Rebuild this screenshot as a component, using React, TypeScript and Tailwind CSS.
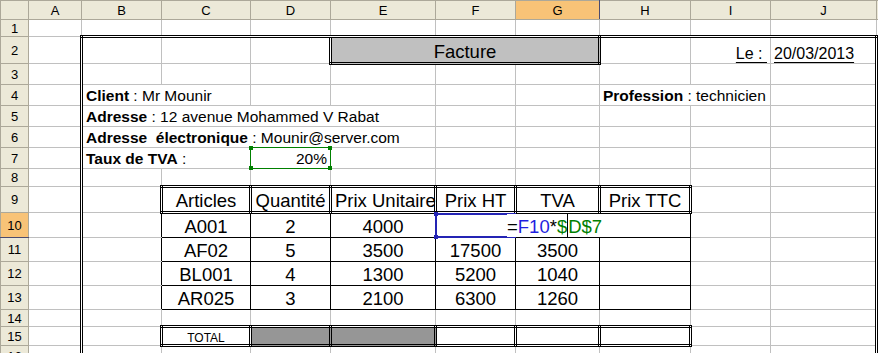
import type { ReactNode } from 'react';

const base = 'p-0 px-[3px] align-bottom whitespace-pre leading-[1.15]';
const g = 'border border-[#c0c0c0]';
const L = 'border border-[#c0c0c0] border-double border-l-[3px] border-l-black';
const R = 'border border-[#c0c0c0] border-double border-r-[3px] border-r-black';
const T = 'border border-[#c0c0c0] border-double border-t-[3px] border-t-black';
const LT = 'border border-[#c0c0c0] border-double border-l-[3px] border-t-[3px] border-l-black border-t-black';
const RT = 'border border-[#c0c0c0] border-double border-r-[3px] border-t-[3px] border-r-black border-t-black';
const LB = 'border border-[#c0c0c0] border-double border-l-[3px] border-l-black border-r-black';
const box3 = 'border-[3px] border-double border-black';
const box1 = 'border border-double border-black';

const rowHead = 'p-0 border border-[#aca899] bg-[#ece9d8] text-center align-middle text-[13px] font-normal leading-none text-black';
const rowHeadSel = 'p-0 border border-[#aca899] border-b-[#4b4b6f] bg-[#f8c377] text-center align-middle text-[13px] font-normal leading-none text-black';

const Cell = ({ cls = g, span, children, extra = '' }: { cls?: string; span?: number; children?: ReactNode; extra?: string }) => (
  <td colSpan={span} className={`${base} ${cls} ${extra}`}>
    {children}
  </td>
);

const Item = ({ cls = box1, children }: { cls?: string; children?: ReactNode }) => (
  <td className={`${base} ${cls} text-center text-[18.5px] px-0`}>{children}</td>
);

const products = [
  ['A001', '2', '4000', '', '', ''],
  ['AF02', '5', '3500', '17500', '3500', ''],
  ['BL001', '4', '1300', '5200', '1040', ''],
  ['AR025', '3', '2100', '6300', '1260', ''],
];

// plain row of the sheet inside the frame (B..J), A and K outside
const FrameRow = ({ n, h }: { n: number; h: string }) => (
  <tr className={h}>
    <th className={rowHead}>{n}</th>
    <Cell />
    <Cell cls={L} />
    <Cell />
    <Cell />
    <Cell />
    <Cell />
    <Cell />
    <Cell />
    <Cell />
    <Cell cls={R} />
    <Cell />
  </tr>
);

export default function App() {
  const letters = ['A', 'B', 'C', 'D', 'E', 'F', 'G', 'H', 'I', 'J', ''];

  return (
    <div className="w-[878px] h-[353px] overflow-hidden bg-white font-['Liberation_Sans',Arial,sans-serif] text-black">
      <table className="table-fixed border-collapse w-[976px] text-[15.5px]">
        <colgroup>
          <col className="w-[28px]" />
          <col className="w-[53px]" />
          <col className="w-[80px]" />
          <col className="w-[89px]" />
          <col className="w-[80px]" />
          <col className="w-[105px]" />
          <col className="w-[80px]" />
          <col className="w-[84px]" />
          <col className="w-[91px]" />
          <col className="w-[80px]" />
          <col className="w-[106px]" />
          <col className="w-[100px]" />
        </colgroup>
        <tbody>
          <tr className="h-[19px]">
            <th className={rowHead}></th>
            {letters.map((l) => (
              <th
                key={l || 'k'}
                className={
                  l === 'G'
                    ? 'p-0 border border-[#aca899] border-r-[#4b4b6f] bg-[#f8c377] text-center align-middle text-[13px] font-normal leading-none'
                    : 'p-0 border border-[#aca899] bg-[#ece9d8] text-center align-middle text-[13px] font-normal leading-none'
                }
              >
                {l}
              </th>
            ))}
          </tr>

          <tr className="h-[17px]">
            <th className={rowHead}>1</th>
            {letters.map((l) => (
              <Cell key={l || 'k'} />
            ))}
          </tr>

          <tr className="h-[27px]">
            <th className={rowHead}>2</th>
            <Cell />
            <Cell cls={LT} />
            <Cell cls={T} />
            <Cell cls={T} />
            <Cell cls={box3} span={3} extra="bg-[#c0c0c0] text-center text-[18.5px]">
              Facture
            </Cell>
            <Cell cls={T} />
            <Cell cls={T} extra="text-right text-[16px]">
              <span className="underline underline-offset-[3px]">Le : </span>
            </Cell>
            <Cell cls={RT} extra="text-[16px]">
              <span className="underline underline-offset-[3px]">20/03/2013</span>
            </Cell>
            <Cell />
          </tr>

          <FrameRow n={3} h="h-[21px]" />

          <tr className="h-[21px]">
            <th className={rowHead}>4</th>
            <Cell />
            <Cell cls={L} span={2}>
              <b>Client</b> : Mr Mounir
            </Cell>
            <Cell />
            <Cell />
            <Cell />
            <Cell />
            <Cell span={2}>
              <b>Profession</b> : technicien
            </Cell>
            <Cell cls={R} />
            <Cell />
          </tr>

          <tr className="h-[21px]">
            <th className={rowHead}>5</th>
            <Cell />
            <Cell cls={L} span={4}>
              <b>Adresse</b> : 12 avenue Mohammed V Rabat
            </Cell>
            <Cell />
            <Cell />
            <Cell />
            <Cell />
            <Cell cls={R} />
            <Cell />
          </tr>

          <tr className="h-[21px]">
            <th className={rowHead}>6</th>
            <Cell />
            <Cell cls={L} span={4}>
              <b>{'Adresse  électronique'}</b> : Mounir@server.com
            </Cell>
            <Cell />
            <Cell />
            <Cell />
            <Cell />
            <Cell cls={R} />
            <Cell />
          </tr>

          <tr className="h-[21px]">
            <th className={rowHead}>7</th>
            <Cell />
            <Cell cls={L} span={2}>
              <b>Taux de TVA</b> :
            </Cell>
            <Cell extra="relative text-right">
              20%
              <div className="absolute -inset-px border border-[#008000]">
                <div className="absolute -left-[2px] -top-[2px] w-[4px] h-[4px] bg-[#008000]" />
                <div className="absolute -right-[2px] -top-[2px] w-[4px] h-[4px] bg-[#008000]" />
                <div className="absolute -left-[2px] -bottom-[2px] w-[4px] h-[4px] bg-[#008000]" />
                <div className="absolute -right-[2px] -bottom-[2px] w-[4px] h-[4px] bg-[#008000]" />
              </div>
            </Cell>
            <Cell />
            <Cell />
            <Cell />
            <Cell />
            <Cell />
            <Cell cls={R} />
            <Cell />
          </tr>

          <FrameRow n={8} h="h-[18px]" />

          <tr className="h-[26px]">
            <th className={rowHead}>9</th>
            <Cell />
            <Cell cls={L} />
            <Item cls={box3}>Articles</Item>
            <Item cls={box3}>Quantité</Item>
            <Item cls={box3}>Prix Unitaire</Item>
            <Item cls={box3}>Prix HT</Item>
            <Item cls={box3}>TVA</Item>
            <Item cls={box3}>Prix TTC</Item>
            <Cell />
            <Cell cls={R} />
            <Cell />
          </tr>

          {products.map((p, i) => (
            <tr key={p[0]} className={i === 0 ? 'h-[25px]' : 'h-[24px]'}>
              <th className={i === 0 ? rowHeadSel : rowHead}>{10 + i}</th>
              <Cell />
              <Cell cls={LB} />
              <Item>{p[0]}</Item>
              <Item>{p[1]}</Item>
              <Item>{p[2]}</Item>
              {i === 0 ? (
                <>
                  <td className={`${base} ${box1} relative`}>
                    <div className="absolute -inset-px border-2 border-[#2424b4]">
                      <div className="absolute -left-[3px] -top-[3px] w-[4px] h-[4px] bg-[#2424b4]" />
                      <div className="absolute -left-[3px] -bottom-[3px] w-[4px] h-[4px] bg-[#2424b4]" />
                    </div>
                  </td>
                  <td className={`${base} ${box1} relative`}>
                    <div className="absolute left-[-9px] top-0 bottom-0 w-[100px] bg-white flex items-end text-[18.5px] leading-[1.15]">
                      <span>=</span>
                      <span className="text-[#1f1fe0]">F10</span>
                      <span>*</span>
                      <span className="text-[#008000]">$</span>
                      <span className="w-px self-stretch bg-black" />
                      <span className="text-[#008000]">D$7</span>
                    </div>
                  </td>
                </>
              ) : (
                <>
                  <Item>{p[3]}</Item>
                  <Item>{p[4]}</Item>
                </>
              )}
              <Item>{p[5]}</Item>
              <Cell />
              <Cell cls={R} />
              <Cell />
            </tr>
          ))}

          <FrameRow n={14} h="h-[17px]" />

          <tr className="h-[19px]">
            <th className={rowHead}>15</th>
            <Cell />
            <Cell cls={L} />
            <td className={`${base} ${box3} text-center text-[12px] leading-none`}>TOTAL</td>
            <td className={`${base} ${box3} bg-[#969696]`} />
            <td className={`${base} ${box3} bg-[#969696]`} />
            <td className={`${base} ${box3}`} />
            <td className={`${base} ${box3}`} />
            <td className={`${base} ${box3}`} />
            <Cell />
            <Cell cls={R} />
            <Cell />
          </tr>

          <FrameRow n={16} h="h-[21px]" />
        </tbody>
      </table>
    </div>
  );
}
